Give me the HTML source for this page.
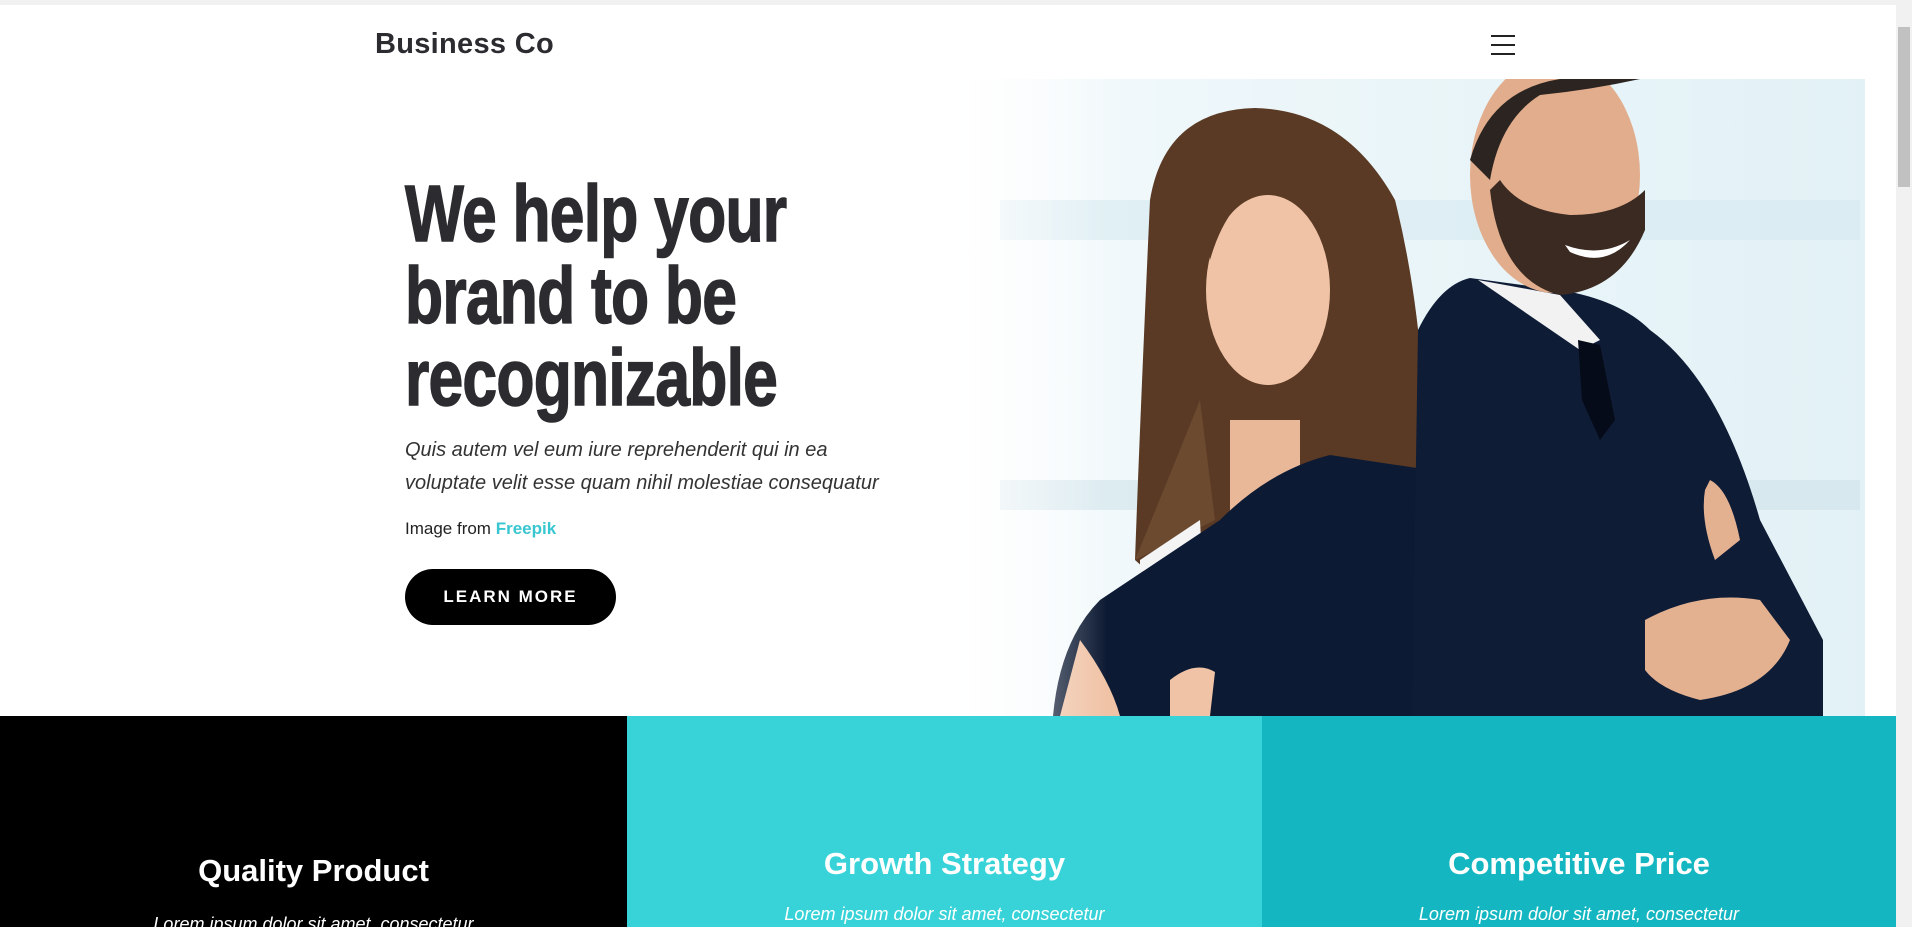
<!DOCTYPE html>
<html><head><meta charset="utf-8">
<style>
*{margin:0;padding:0;box-sizing:border-box}
html,body{width:1912px;height:927px;overflow:hidden;background:#fff;font-family:"Liberation Sans",sans-serif}
.topbar{position:absolute;left:0;top:0;width:1912px;height:5px;background:#f1f1f1}
.scroll{position:absolute;right:0;top:5px;width:16px;height:922px;background:#f1f1f1}
.thumb{position:absolute;right:2px;top:22px;width:12px;height:160px;background:#c1c1c1}
.brand{position:absolute;left:375px;top:28px;font-size:29px;font-weight:bold;color:#2b2b30;letter-spacing:0.3px}
.burger{position:absolute;left:1491px;top:35px;width:24px}
.burger i{display:block;height:2px;background:#222;margin-bottom:7px}
.h1{position:absolute;left:405px;top:173px;font-size:80px;line-height:82px;font-weight:bold;color:#2c2c30;transform:scaleX(.78);transform-origin:left top;white-space:nowrap;letter-spacing:-1px;-webkit-text-stroke:1.5px #2c2c30}
.p{position:absolute;left:405px;top:434px;font-size:20px;line-height:33px;font-style:italic;color:#333;width:480px}
.src{position:absolute;left:405px;top:519px;font-size:17px;color:#222}
.src b{color:#38c6d0}
.btn{position:absolute;left:405px;top:569px;width:211px;height:56px;border-radius:28px;background:#000;color:#fff;font-weight:bold;font-size:17px;letter-spacing:2px;text-align:center;line-height:56px}
.sec{position:absolute;top:716px;height:211px;color:#fff;text-align:center}
.sec h3{position:absolute;left:0;right:0;font-size:31px;font-weight:bold}
.sec p{position:absolute;left:0;right:0;top:188px;font-style:italic;font-size:18px}
</style></head><body>
<div class="topbar"></div>
<div class="brand">Business Co</div>
<div class="burger"><i></i><i></i><i></i></div>

<svg style="position:absolute;left:927px;top:79px" width="969" height="637" viewBox="927 79 969 637">
<defs>
<linearGradient id="bg" x1="0" x2="1" y1="0" y2="0">
<stop offset="0" stop-color="#fff"/><stop offset="0.25" stop-color="#eef7fa"/><stop offset="1" stop-color="#e2f1f6"/>
</linearGradient>
<linearGradient id="fadeL" x1="0" x2="1"><stop offset="0" stop-color="#fff"/><stop offset="1" stop-color="#fff" stop-opacity="0"/></linearGradient>
</defs>
<rect x="927" y="79" width="969" height="637" fill="url(#bg)"/>
<rect x="1000" y="200" width="860" height="40" fill="#d6e9f0" opacity=".6"/>
<rect x="1000" y="480" width="860" height="30" fill="#cfe3ea" opacity=".6"/>
<rect x="1865" y="79" width="31" height="637" fill="#fff"/>
<path d="M1150 200 Q1165 110 1255 108 Q1345 110 1395 200 Q1420 300 1425 420 L1420 640 L1320 660 L1180 600 L1135 560 Q1140 420 1150 200Z" fill="#5a3a24"/>
<ellipse cx="1268" cy="290" rx="62" ry="95" fill="#f0c3a6"/>
<path d="M1205 180 Q1240 130 1300 150 Q1340 170 1350 240 L1345 300 Q1330 200 1280 180 Q1230 190 1210 260Z" fill="#5a3a24"/>
<path d="M1135 560 Q1180 450 1200 400 L1215 520 Z" fill="#6b4a30"/>
<path d="M1230 420 L1300 420 L1300 500 L1230 520Z" fill="#e8b899"/>
<path d="M1140 560 L1200 520 L1210 716 L1140 716Z" fill="#f4f4f4"/>
<path d="M1053 716 Q1060 640 1100 600 L1160 560 L1220 520 Q1270 470 1330 455 L1430 470 L1431 716Z" fill="#0d1a33"/>
<path d="M1080 640 Q1110 680 1120 716 L1060 716Z" fill="#f0c3a6"/>
<path d="M1170 680 Q1195 660 1215 672 L1210 716 L1170 716Z" fill="#f0c3a6"/>
<path d="M1412 716 L1418 330 Q1440 285 1470 278 L1560 290 Q1620 300 1650 330 Q1720 380 1760 520 L1823 640 L1823 716Z" fill="#0e1c36"/>
<path d="M1478 280 L1560 295 L1600 340 L1580 350 Z" fill="#f2f2f2"/>
<path d="M1578 340 L1600 345 L1615 420 L1600 440 L1582 400Z" fill="#050b18"/>
<ellipse cx="1555" cy="175" rx="85" ry="118" fill="#e2ad8c"/>
<path d="M1470 160 Q1490 90 1560 79 L1640 79 Q1590 90 1540 95 Q1500 120 1490 180Z" fill="#2b2420"/>
<path d="M1490 190 Q1500 280 1560 295 Q1620 290 1645 230 L1645 190 Q1620 215 1570 215 Q1520 210 1500 180Z" fill="#3a2a22"/>
<path d="M1565 245 Q1600 258 1630 240 Q1605 268 1570 252Z" fill="#fff"/>
<path d="M1645 620 Q1700 590 1760 600 L1790 640 Q1770 690 1700 700 Q1660 690 1645 670Z" fill="#e3b090"/>
<path d="M1710 480 Q1730 490 1740 540 L1715 560 Q1700 520 1705 490Z" fill="#e3b090"/>
<rect x="927" y="79" width="180" height="637" fill="url(#fadeL)"/>
</svg>

<div class="h1">We help your<br>brand to be<br>recognizable</div>
<div class="p">Quis autem vel eum iure reprehenderit qui in ea voluptate velit esse quam nihil molestiae consequatur</div>
<div class="src">Image from <b>Freepik</b></div>
<div class="btn">LEARN MORE</div>

<div class="sec" style="left:0;width:627px;background:#000"><h3 style="top:137px">Quality Product</h3><p style="top:198px">Lorem ipsum dolor sit amet, consectetur</p></div>
<div class="sec" style="left:627px;width:635px;background:#38d3d9"><h3 style="top:130px">Growth Strategy</h3><p>Lorem ipsum dolor sit amet, consectetur</p></div>
<div class="sec" style="left:1262px;width:634px;background:#14b7c1"><h3 style="top:130px">Competitive Price</h3><p>Lorem ipsum dolor sit amet, consectetur</p></div>

<div class="scroll"><div class="thumb"></div></div>
</body></html>
